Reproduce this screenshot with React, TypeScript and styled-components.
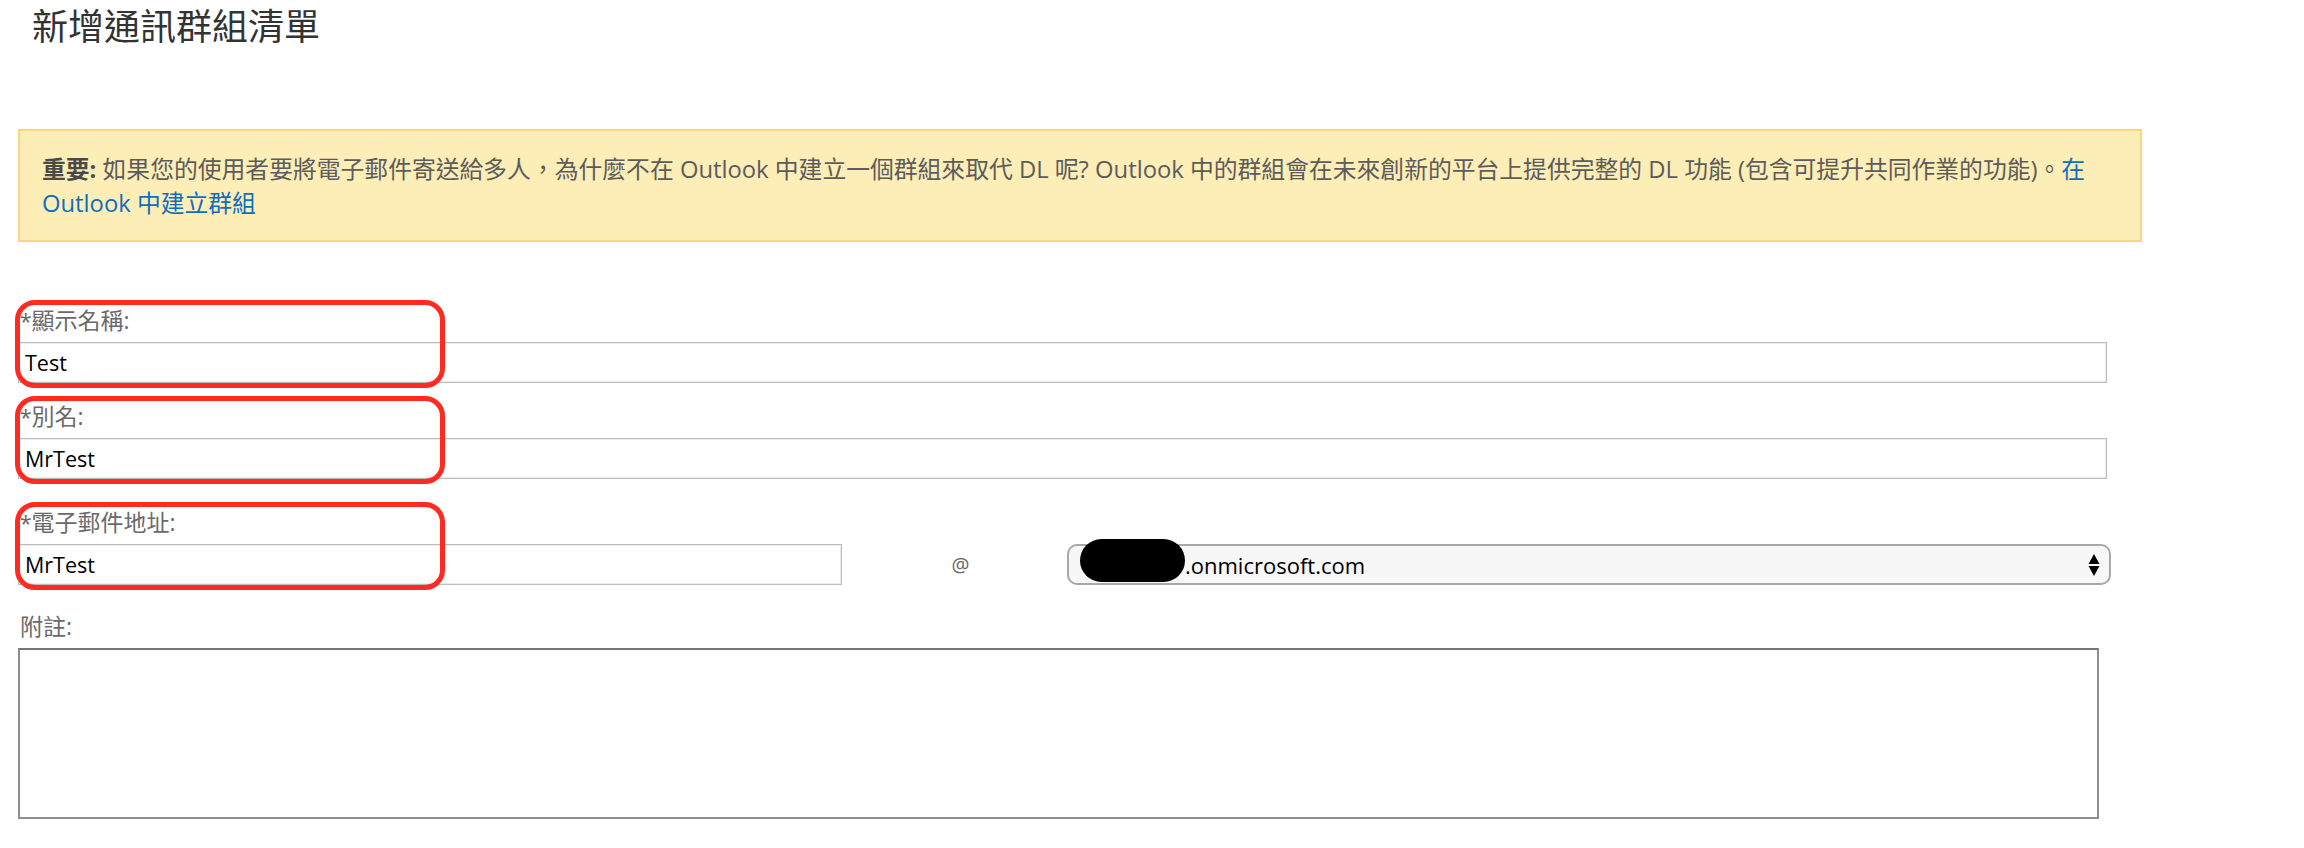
import styled, { createGlobalStyle } from "styled-components";

const GlobalStyle = createGlobalStyle`
  html, body {
    margin: 0;
    padding: 0;
    background: #fff;
  }
  body {
    font-family: "Open Sans", "Noto Sans CJK TC", sans-serif;
  }
`;

const Page = styled.div`
  padding-left: 18px;
  width: 2124px;
`;

const Title = styled.h1`
  margin: 0 0 0 14px;
  font-size: 36px;
  font-weight: 400;
  line-height: 54px;
  color: #333;
`;

const Notice = styled.div`
  margin-top: 75px;
  width: 2124px;
  box-sizing: border-box;
  padding: 21px 20px 20px 22px;
  background: #fdedb7;
  border: 2px solid #fbd67f;
  font-size: 23.8px;
  line-height: 34px;
  color: #5c5c5c;
`;

const Strong = styled.b`
  font-weight: 700;
  color: #4a4a4a;
`;

const Link = styled.a`
  color: #106ebe;
  text-decoration: none;
`;

const Field = styled.div<{ $top: number }>`
  position: relative;
  margin-top: ${(p) => p.$top}px;
`;

const Label = styled.div`
  position: relative;
  z-index: 2;
  height: 34px;
  padding-left: 2px;
  font-size: 23px;
  line-height: 34px;
  color: #6a6a6a;
  margin-bottom: 5px;
`;

const Star = styled.span`
  font-size: 21px;
  line-height: 1;
  color: #666;
`;

const TextBox = styled.div<{ $width: number }>`
  width: ${(p) => p.$width}px;
  height: 41px;
  box-sizing: border-box;
  border: 1px solid #bdbdbd;
  box-shadow: inset 0 0 0 1px #ececec;
  padding: 0 6px;
  display: flex;
  align-items: center;
  font-size: 21.5px;
  color: #000;
`;

const Row = styled.div`
  display: flex;
  align-items: center;
`;

const At = styled.span`
  width: 225px;
  padding-left: 12px;
  box-sizing: border-box;
  text-align: center;
  font-size: 20px;
  color: #666;
`;

const SelectBox = styled.div`
  position: relative;
  width: 1044px;
  height: 41px;
  box-sizing: border-box;
  border: 2px solid #a8a8a8;
  border-radius: 10px;
  background: #f7f7f7;
  display: flex;
  align-items: center;
  justify-content: space-between;
  padding: 0 9px 0 116px;
  font-size: 22px;
  color: #000;
`;

const Redaction = styled.span`
  position: absolute;
  left: 11px;
  top: -7px;
  width: 105px;
  height: 43px;
  border-radius: 22px;
  background: #000;
`;

const Notes = styled.textarea`
  display: block;
  width: 2081px;
  height: 171px;
  box-sizing: border-box;
  border: 2px solid #8e8e8e;
  border-top-color: #767676;
  resize: none;
  margin: 0;
  outline: none;
`;

const Highlight = styled.span`
  position: absolute;
  z-index: 1;
  left: -3px;
  top: -3px;
  width: 430px;
  height: 88px;
  box-sizing: border-box;
  border: 5px solid #ff2b22;
  border-radius: 20px;
  pointer-events: none;
`;

function Arrows() {
  return (
    <svg width="12" height="22" viewBox="0 0 12 22">
      <path d="M6 0 L11.5 10 L0.5 10 Z" fill="#000" />
      <path d="M0.5 12 L11.5 12 L6 22 Z" fill="#000" />
    </svg>
  );
}

export default function App() {
  return (
    <>
      <GlobalStyle />
      <Page>
        <Title>新增通訊群組清單</Title>
        <Notice>
          <Strong>重要:</Strong> 如果您的使用者要將電子郵件寄送給多人，為什麼不在 Outlook
          中建立一個群組來取代 DL 呢? Outlook 中的群組會在未來創新的平台上提供完整的 DL 功能
          (包含可提升共同作業的功能)。<Link href="#">在<br />Outlook 中建立群組</Link>
        </Notice>

        <Field $top={61}>
          <Label>
            <Star>*</Star>顯示名稱:
          </Label>
          <TextBox $width={2089}>Test</TextBox>
          <Highlight />
        </Field>

        <Field $top={16}>
          <Label>
            <Star>*</Star>別名:
          </Label>
          <TextBox $width={2089}>MrTest</TextBox>
          <Highlight />
        </Field>

        <Field $top={26}>
          <Label>
            <Star>*</Star>電子郵件地址:
          </Label>
          <Row>
            <TextBox $width={824}>MrTest</TextBox>
            <At>@</At>
            <SelectBox>
              <Redaction />
              <span>.onmicrosoft.com</span>
              <Arrows />
            </SelectBox>
          </Row>
          <Highlight />
        </Field>

        <Field $top={24}>
          <Label>附註:</Label>
          <Notes />
        </Field>
      </Page>
    </>
  );
}
